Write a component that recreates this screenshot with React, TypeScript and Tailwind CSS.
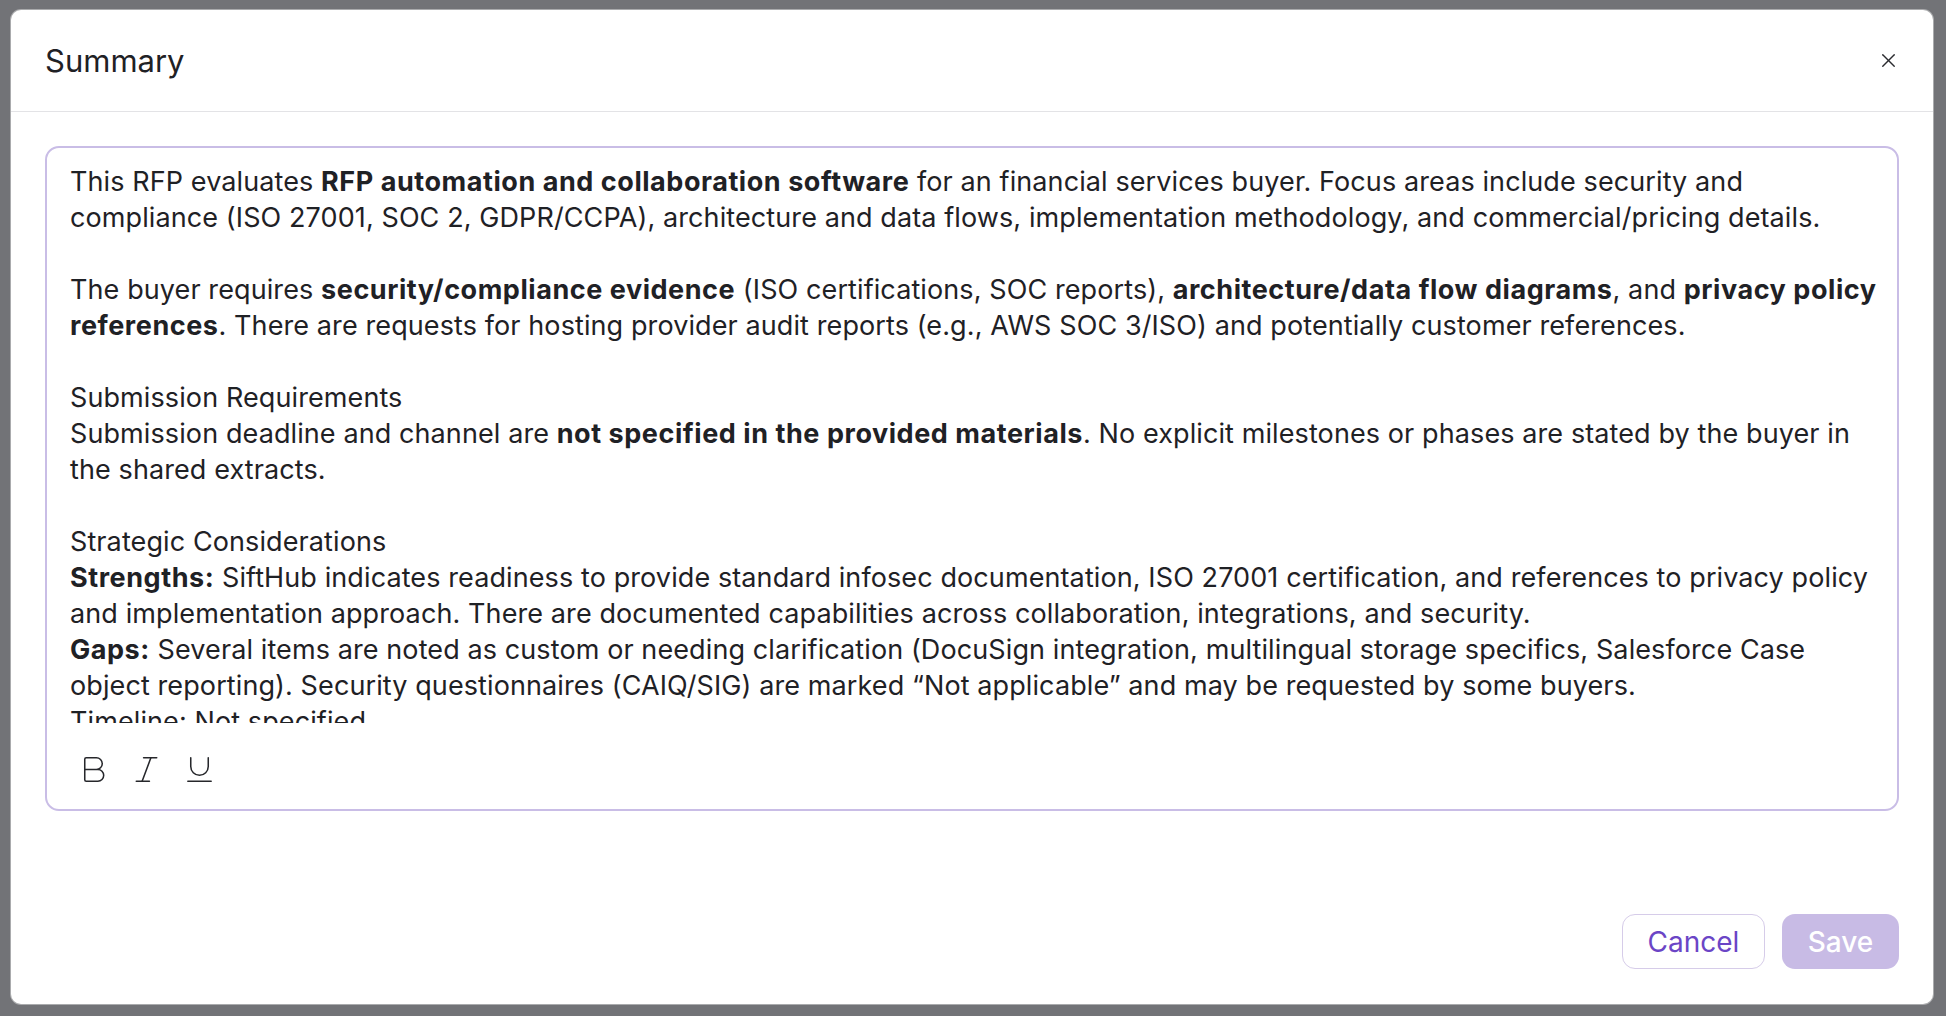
import { Bold, Italic, Underline, X } from "lucide-react"

const App = () => {
    return (
        <div className="w-full h-[1016px] bg-[#727377] pt-[10px] pl-[11px] font-['Inter',sans-serif] text-[#1f2125] overflow-hidden">
            <div className="w-[1922px] h-[994px] bg-white rounded-[10px] shadow-[0_0_0_1px_rgba(255,255,255,0.4)] flex flex-col">
                {/* Cabecera */}
                <div className="h-[102px] flex items-center justify-between pl-[34px] pr-[33px] border-b border-[#e3e3e6]">
                    <h2 className="text-[31px] leading-none">Summary</h2>
                    <X className="w-[23px] h-[23px] text-[#2a2b2f]" strokeWidth={1.4} />
                </div>

                {/* Editor */}
                <div className="flex-1 flex flex-col px-[34px] pt-[34px] pb-[35px]">
                    <div className="border-2 border-[#c9bde6] rounded-[14px] flex flex-col">
                        <div className="h-[575px] overflow-hidden pl-[23px] pr-[16px] pt-[16px] text-[27px] leading-[36px] tracking-[0.1px]">
                            <p>
                                This RFP evaluates <b className="tracking-[0.55px]">RFP automation and collaboration software</b> for an financial services buyer. Focus areas include security and
                                compliance (ISO 27001, SOC 2, GDPR/CCPA), architecture and data flows, implementation methodology, and commercial/pricing details.
                            </p>
                            <p>&nbsp;</p>
                            <p>
                                The buyer requires <b className="tracking-[0.55px]">security/compliance evidence</b> (ISO certifications, SOC reports), <b className="tracking-[0.55px]">architecture/data flow diagrams</b>, and <b className="tracking-[0.55px]">privacy policy references</b>. There are requests for hosting provider audit reports (e.g., AWS SOC 3/ISO) and potentially customer references.
                            </p>
                            <p>&nbsp;</p>
                            <p>Submission Requirements</p>
                            <p>
                                Submission deadline and channel are <b className="tracking-[0.55px]">not specified in the provided materials</b>. No explicit milestones or phases are stated by the buyer in the shared extracts.
                            </p>
                            <p>&nbsp;</p>
                            <p>Strategic Considerations</p>
                            <p>
                                <b className="tracking-[0.55px]">Strengths:</b> SiftHub indicates readiness to provide standard infosec documentation, ISO 27001 certification, and references to privacy policy and implementation approach. There are documented capabilities across collaboration, integrations, and security.
                            </p>
                            <p>
                                <b className="tracking-[0.55px]">Gaps:</b> Several items are noted as custom or needing clarification (DocuSign integration, multilingual storage specifics, Salesforce Case object reporting). Security questionnaires (CAIQ/SIG) are marked “Not applicable” and may be requested by some buyers.
                            </p>
                            <p>Timeline: Not specified</p>
                        </div>
                        <div className="h-[86px] flex items-center gap-[18px] pl-[29px] pt-[6px] text-[#26272b]">
                            <Bold className="w-[35px] h-[35px]" strokeWidth={1.05} />
                            <Italic className="w-[35px] h-[35px]" strokeWidth={1.05} />
                            <Underline className="w-[35px] h-[35px]" strokeWidth={1.05} />
                        </div>
                    </div>

                    {/* Botones */}
                    <div className="mt-auto flex justify-end gap-[17px]">
                        <button className="w-[143px] h-[55px] rounded-[13px] border-[1.5px] border-[#d6cce9] bg-white text-[#6b45c6] text-[28px]">
                            Cancel
                        </button>
                        <button className="w-[117px] h-[55px] rounded-[13px] bg-[#c8bbe5] text-white text-[28px] font-medium">
                            Save
                        </button>
                    </div>
                </div>
            </div>
        </div>
    )
}

export default App
